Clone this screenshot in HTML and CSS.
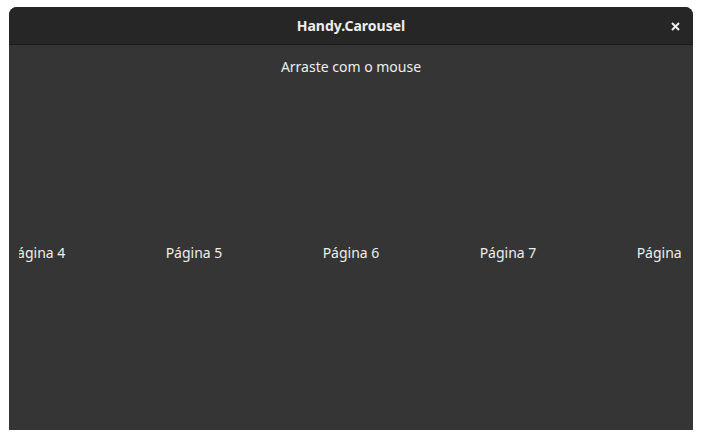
FILE: index.html
```html
<!DOCTYPE html>
<html>
<head>
<meta charset="utf-8">
<link rel="stylesheet" href="styles.css">
</head>
<body>
<div class="window">
  <div class="titlebar">
    <span class="title">Handy.Carousel</span>
    <button class="close" aria-label="Fechar">
      <svg width="9" height="9" viewBox="0 0 9 9"><path d="M1 1 L8 8 M8 1 L1 8" stroke="#eeeeec" stroke-width="2" stroke-linecap="butt"/></svg>
    </button>
  </div>
  <div class="content">
    <div class="hint">Arraste com o mouse</div>
    <div class="carousel">
      <div class="page">Página 4</div>
      <div class="page">Página 5</div>
      <div class="page">Página 6</div>
      <div class="page">Página 7</div>
      <div class="page">Página 8</div>
    </div>
  </div>
</div>
</body>
</html>
```

FILE: styles.css
```css
html, body {
  margin: 0;
  padding: 0;
  background: #ffffff;
}
body {
  padding: 7px 0 0 9px;
  font-family: "Noto Sans", "DejaVu Sans", sans-serif;
  color: #eeeeec;
}
.window {
  width: 684px;
  height: 423px;
  border-radius: 8px 8px 0 0;
  overflow: hidden;
  background: #353535;
  display: flex;
  flex-direction: column;
}
.titlebar {
  height: 37px;
  flex: none;
  background: #262626;
  border-bottom: 1px solid #1b1b1b;
  display: flex;
  align-items: center;
  justify-content: center;
  position: relative;
}
.title {
  font-weight: bold;
  font-size: 14px;
  color: #eeeeec;
}
.close {
  position: absolute;
  right: 13px;
  top: 15px;
  width: 9px;
  height: 9px;
  padding: 0;
  border: 0;
  background: none;
  display: flex;
}
.content {
  flex: 1;
  display: flex;
  flex-direction: column;
  min-height: 0;
}
.hint {
  margin-top: 12px;
  line-height: 20px;
  font-size: 14px;
  text-align: center;
}
.carousel {
  margin: 0 10px 0 10px;
  height: 350px;
  flex: none;
  display: flex;
  justify-content: center;
  align-items: center;
  overflow: hidden;
}
.page {
  flex: none;
  width: 157px;
  text-align: center;
  font-size: 14px;
}
```
